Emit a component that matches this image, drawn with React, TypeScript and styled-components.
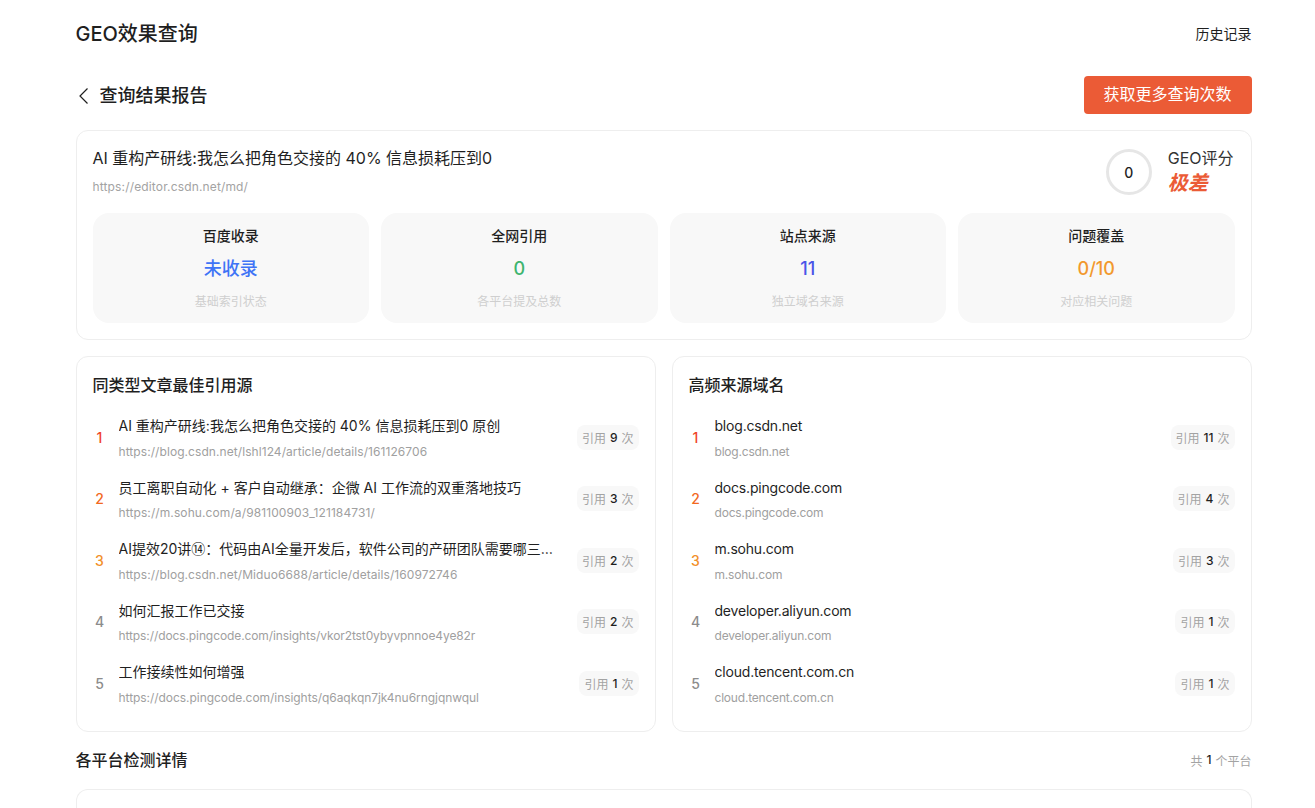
import React from "react";
import styled, { createGlobalStyle } from "styled-components";

const Global = createGlobalStyle`
  html, body { margin: 0; padding: 0; background: #fff; height: 808px; overflow: hidden; }
  body { font-family: Inter, "Noto Sans CJK SC", sans-serif; color: #1f1f1f; }
  * { box-sizing: border-box; }
`;

const Page = styled.div`
  width: 1176px;
  margin-left: 75.5px;
`;
const TopBar = styled.header`
  display: flex;
  justify-content: space-between;
  align-items: center;
  height: 68px;
`;
const Brand = styled.h1`
  margin: 0;
  font-size: 20px;
  font-weight: 500;
  line-height: 28px;
  color: #1f1f1f;
`;
const TopLink = styled.span`
  font-size: 14px;
  line-height: 20px;
  color: #1f1f1f;
`;
const ReportBar = styled.div`
  display: flex;
  justify-content: space-between;
  align-items: center;
  margin-top: 8px;
  height: 38px;
`;
const ReportTitle = styled.div`
  display: flex;
  align-items: center;
  gap: 8px;
  font-size: 18px;
  font-weight: 500;
  line-height: 26px;
  padding-top: 2px;
`;
const Cta = styled.button`
  width: 168px;
  height: 38px;
  border: 0;
  border-radius: 4px;
  background: #eb5b36;
  color: #fff;
  font: inherit;
  font-size: 16px;
  line-height: 24px;
  padding: 0 0 2px;
`;
const Card = styled.section`
  background: #fff;
  border: 1px solid #eeeeee;
  border-radius: 12px;
`;
const Summary = styled(Card)`
  margin-top: 16px;
  height: 210px;
  padding: 15px 16px 16px;
`;
const SummaryHead = styled.div`
  display: flex;
  justify-content: space-between;
`;
const ArticleTitle = styled.div`
  font-size: 16px;
  line-height: 24px;
  font-weight: 400;
  color: #1f1f1f;
`;
const ArticleUrl = styled.div`
  margin-top: 8px;
  font-size: 12px;
  line-height: 18px;
  letter-spacing: 0.15px;
  color: #a3a3a3;
`;
const ScoreBox = styled.div`
  display: flex;
  align-items: center;
  gap: 16px;
`;
const Ring = styled.div`
  width: 46px;
  height: 46px;
  margin-top: 2px;
  border: 3px solid #e6e6e6;
  border-radius: 50%;
  display: flex;
  align-items: center;
  justify-content: center;
  font-size: 14px;
  font-weight: 500;
  color: #1f1f1f;
`;
const ScoreText = styled.div`
  display: flex;
  flex-direction: column;
  padding: 1px 1px 0 0;
`;
const ScoreLabel = styled.span`
  font-size: 16px;
  line-height: 22px;
  color: #333;
`;
const ScoreValue = styled.span`
  margin-top: 1px;
  font-size: 20px;
  line-height: 26px;
  font-weight: 700;
  font-style: italic;
  color: #eb5b36;
`;
const Stats = styled.div`
  margin-top: 17px;
  display: grid;
  grid-template-columns: repeat(4, minmax(0, 1fr));
  gap: 12px;
`;
const Stat = styled.div`
  height: 110px;
  border-radius: 16px;
  background: #f8f8f8;
  display: flex;
  flex-direction: column;
  align-items: center;
  padding-top: 13px;
`;
const StatLabel = styled.div`
  font-size: 14px;
  line-height: 20px;
  font-weight: 500;
  color: #1f1f1f;
`;
const StatValue = styled.div<{ $color: string }>`
  margin-top: 10px;
  font-size: 18px;
  line-height: 26px;
  font-weight: 500;
  color: ${(p) => p.$color};
`;
const StatHint = styled.div`
  margin-top: 11px;
  font-size: 12px;
  line-height: 18px;
  color: #cfcfcf;
`;
const Columns = styled.div`
  margin-top: 16px;
  display: grid;
  grid-template-columns: repeat(2, minmax(0, 1fr));
  gap: 16px;
`;
const ListCard = styled(Card)`
  height: 376px;
  padding: 16px 16px 0;
`;
const ListTitle = styled.h2`
  margin: 0 0 9.5px;
  font-size: 16px;
  line-height: 24px;
  font-weight: 500;
  color: #1f1f1f;
`;
const Row = styled.div`
  height: 61.5px;
  display: flex;
  align-items: center;
  gap: 12px;
`;
const Rank = styled.span<{ $color: string }>`
  width: 14px;
  flex: none;
  text-align: center;
  font-size: 14px;
  font-weight: 500;
  color: ${(p) => p.$color};
`;
const RowBody = styled.div`
  flex: 1;
  min-width: 0;
  padding-top: 1px;
`;
const RowTitle = styled.div<{ $track: number }>`
  font-size: 14px;
  line-height: 22px;
  letter-spacing: ${(p) => p.$track}px;
  white-space: nowrap;
  overflow: hidden;
  color: #1f1f1f;
`;
const RowUrl = styled.div<{ $track: number }>`
  margin-top: 5.5px;
  font-size: 12px;
  line-height: 18px;
  letter-spacing: ${(p) => p.$track}px;
  white-space: nowrap;
  color: #a0a0a0;
`;
const Badge = styled.span`
  flex: none;
  height: 25px;
  padding: 0 5px;
  border-radius: 8px;
  background: #f8f8f8;
  display: flex;
  align-items: center;
  gap: 4px;
  font-size: 12px;
  color: #a3a3a3;
`;
const Count = styled.b`
  font-weight: 500;
  color: #1f1f1f;
`;
const SectionHead = styled.div`
  margin-top: 16px;
  height: 24px;
  display: flex;
  justify-content: space-between;
  align-items: center;
`;
const SectionTitle = styled.h2`
  margin: 0;
  font-size: 16px;
  line-height: 24px;
  font-weight: 500;
`;
const SectionMeta = styled.span`
  display: flex;
  gap: 4px;
  font-size: 12px;
  color: #a3a3a3;
`;
const PlatformCard = styled(Card)`
  margin-top: 17px;
  height: 19px;
  border-bottom: 0;
  border-bottom-left-radius: 0;
  border-bottom-right-radius: 0;
`;

const rankColors = ["#f0452b", "#f2691f", "#f2902a", "#8c8c8c", "#8c8c8c"];

type RowData = { title: string; url: string; count: string; titleTrack: number; urlTrack: number };

const articles: RowData[] = [
  { title: "AI 重构产研线:我怎么把角色交接的 40% 信息损耗压到0 原创", url: "https://blog.csdn.net/lshl124/article/details/161126706", count: "9", titleTrack: 0, urlTrack: 0.07 },
  { title: "员工离职自动化 + 客户自动继承：企微 AI 工作流的双重落地技巧", url: "https://m.sohu.com/a/981100903_121184731/", count: "3", titleTrack: 0, urlTrack: 0.1 },
  { title: "AI提效20讲⑭：代码由AI全量开发后，软件公司的产研团队需要哪三…", url: "https://blog.csdn.net/Miduo6688/article/details/160972746", count: "2", titleTrack: 0, urlTrack: 0.07 },
  { title: "如何汇报工作已交接", url: "https://docs.pingcode.com/insights/vkor2tst0ybyvpnnoe4ye82r", count: "2", titleTrack: 0, urlTrack: -0.1 },
  { title: "工作接续性如何增强", url: "https://docs.pingcode.com/insights/q6aqkqn7jk4nu6rngjqnwqul", count: "1", titleTrack: 0, urlTrack: -0.05 },
];
const domainRow = (host: string, count: string): RowData => ({ title: host, url: host, count, titleTrack: -0.2, urlTrack: -0.2 });
const domains: RowData[] = [
  domainRow("blog.csdn.net", "11"),
  domainRow("docs.pingcode.com", "4"),
  domainRow("m.sohu.com", "3"),
  domainRow("developer.aliyun.com", "1"),
  domainRow("cloud.tencent.com.cn", "1"),
];
const stats = [
  { label: "百度收录", value: "未收录", color: "#3f74f6", hint: "基础索引状态" },
  { label: "全网引用", value: "0", color: "#3fb56f", hint: "各平台提及总数" },
  { label: "站点来源", value: "11", color: "#4a55e8", hint: "独立域名来源" },
  { label: "问题覆盖", value: "0/10", color: "#f2992e", hint: "对应相关问题" },
];

function RankList({ title, rows }: { title: string; rows: RowData[] }) {
  return (
    <ListCard>
      <ListTitle>{title}</ListTitle>
      {rows.map((r, i) => (
        <Row key={r.url}>
          <Rank $color={rankColors[i]}>{i + 1}</Rank>
          <RowBody>
            <RowTitle $track={r.titleTrack}>{r.title}</RowTitle>
            <RowUrl $track={r.urlTrack}>{r.url}</RowUrl>
          </RowBody>
          <Badge>
            引用 <Count>{r.count}</Count> 次
          </Badge>
        </Row>
      ))}
    </ListCard>
  );
}

export default function App() {
  return (
    <Page>
      <Global />
      <TopBar>
        <Brand>GEO效果查询</Brand>
        <TopLink>历史记录</TopLink>
      </TopBar>
      <ReportBar>
        <ReportTitle>
          <svg width="16" height="18" viewBox="0 0 16 18" fill="none" stroke="#1f1f1f" strokeWidth="1.2">
            <path d="M11.5 1.5 4 9l7.5 7.5" />
          </svg>
          查询结果报告
        </ReportTitle>
        <Cta>获取更多查询次数</Cta>
      </ReportBar>
      <Summary>
        <SummaryHead>
          <div>
            <ArticleTitle>AI 重构产研线:我怎么把角色交接的 40% 信息损耗压到0</ArticleTitle>
            <ArticleUrl>https://editor.csdn.net/md/</ArticleUrl>
          </div>
          <ScoreBox>
            <Ring>0</Ring>
            <ScoreText>
              <ScoreLabel>GEO评分</ScoreLabel>
              <ScoreValue>极差</ScoreValue>
            </ScoreText>
          </ScoreBox>
        </SummaryHead>
        <Stats>
          {stats.map((s) => (
            <Stat key={s.label}>
              <StatLabel>{s.label}</StatLabel>
              <StatValue $color={s.color}>{s.value}</StatValue>
              <StatHint>{s.hint}</StatHint>
            </Stat>
          ))}
        </Stats>
      </Summary>
      <Columns>
        <RankList title="同类型文章最佳引用源" rows={articles} />
        <RankList title="高频来源域名" rows={domains} />
      </Columns>
      <SectionHead>
        <SectionTitle>各平台检测详情</SectionTitle>
        <SectionMeta>
          <span>共</span>
          <Count>1</Count>
          <span>个平台</span>
        </SectionMeta>
      </SectionHead>
      <PlatformCard />
    </Page>
  );
}
